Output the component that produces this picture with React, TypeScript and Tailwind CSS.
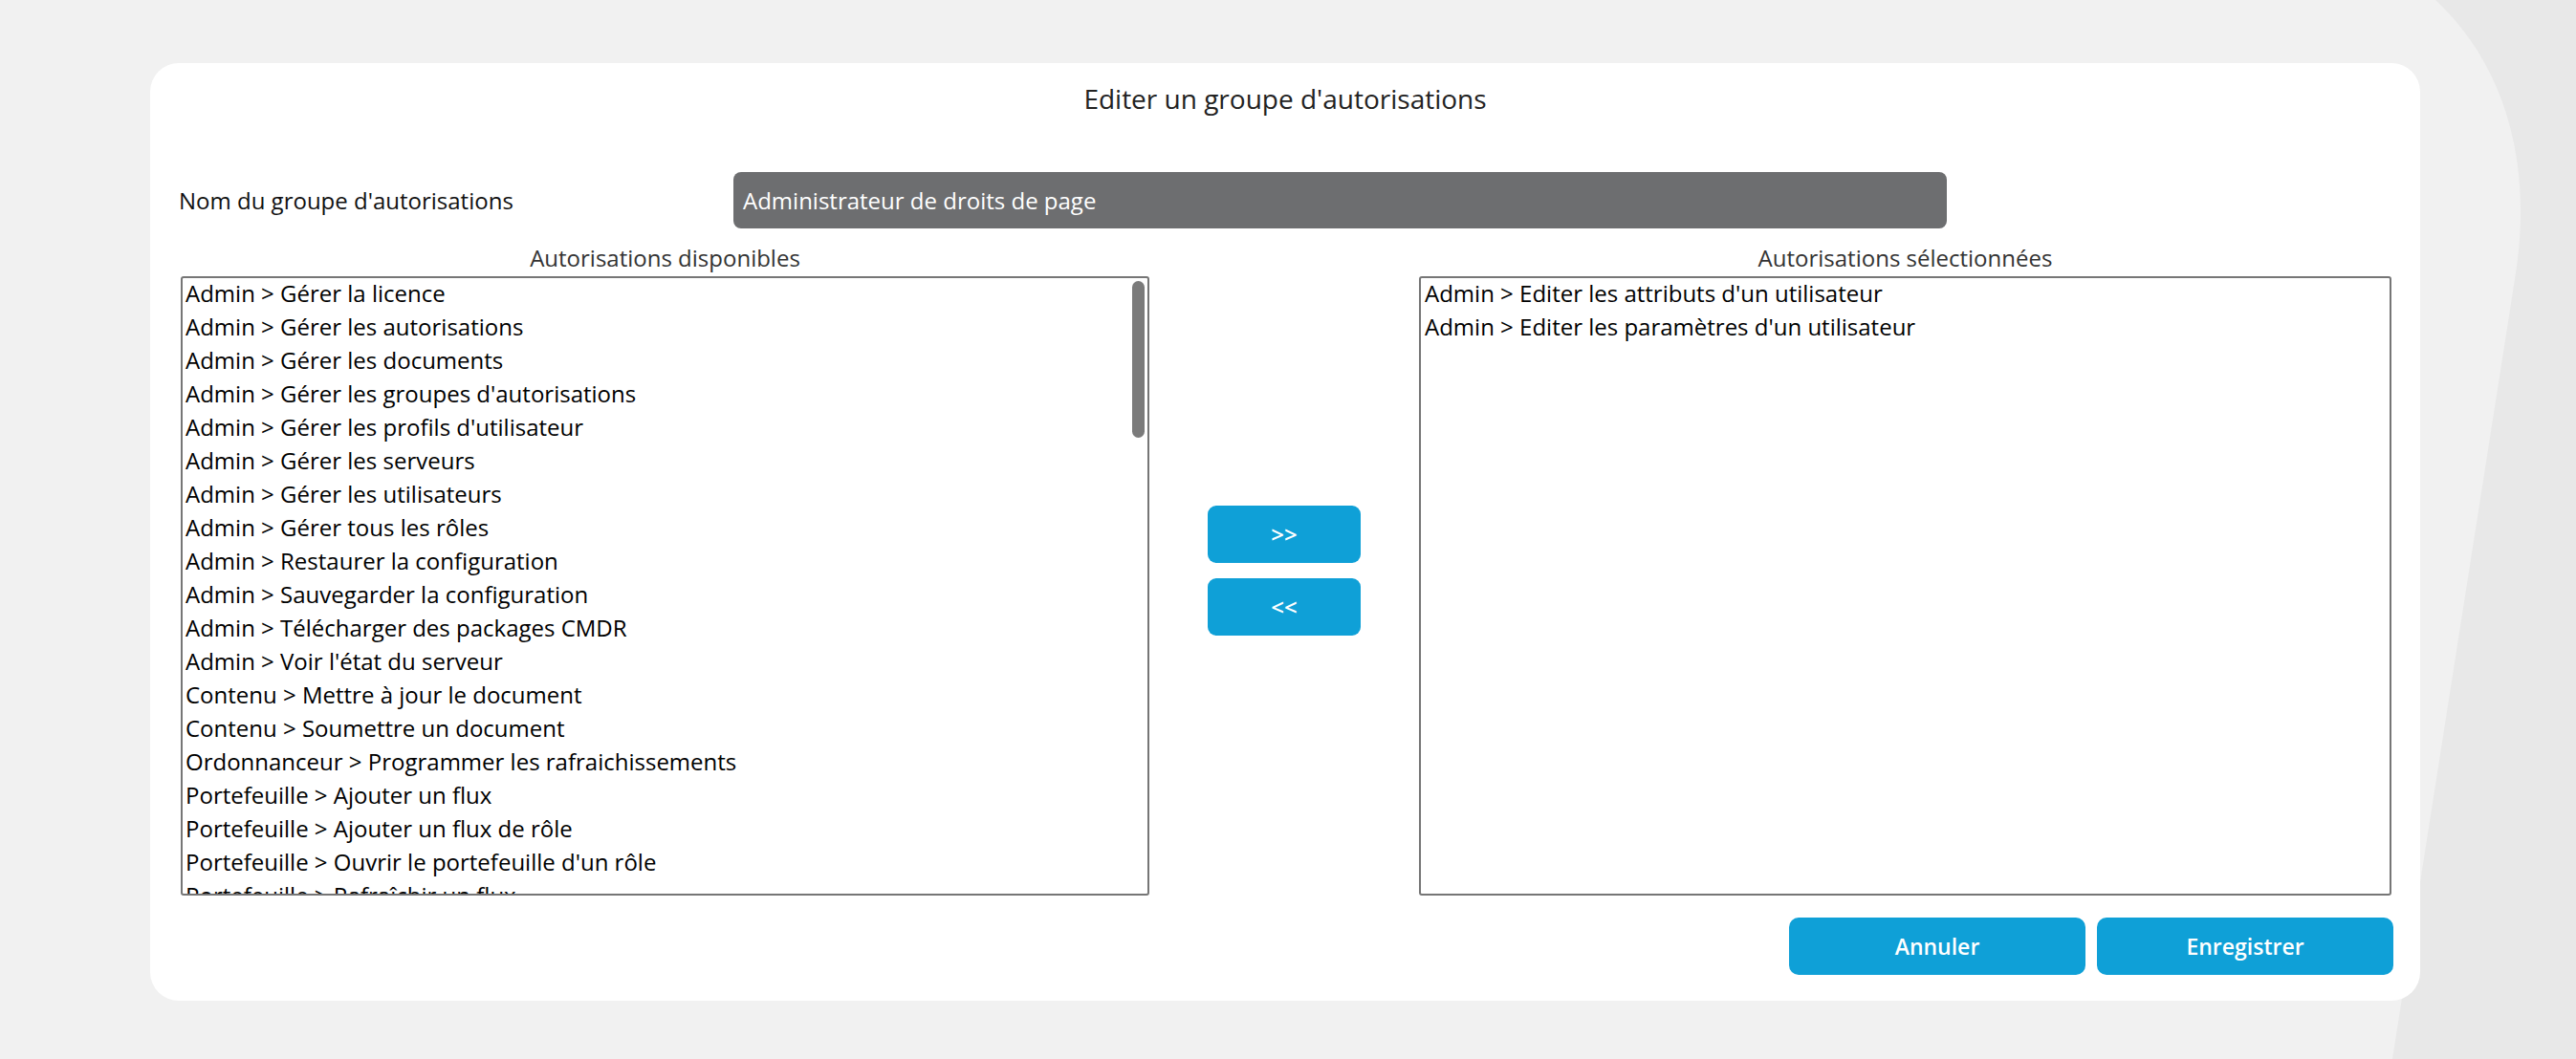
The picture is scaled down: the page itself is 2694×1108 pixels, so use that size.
import { FC } from "react";

const available = [
  "Admin > Gérer la licence",
  "Admin > Gérer les autorisations",
  "Admin > Gérer les documents",
  "Admin > Gérer les groupes d'autorisations",
  "Admin > Gérer les profils d'utilisateur",
  "Admin > Gérer les serveurs",
  "Admin > Gérer les utilisateurs",
  "Admin > Gérer tous les rôles",
  "Admin > Restaurer la configuration",
  "Admin > Sauvegarder la configuration",
  "Admin > Télécharger des packages CMDR",
  "Admin > Voir l'état du serveur",
  "Contenu > Mettre à jour le document",
  "Contenu > Soumettre un document",
  "Ordonnanceur > Programmer les rafraichissements",
  "Portefeuille > Ajouter un flux",
  "Portefeuille > Ajouter un flux de rôle",
  "Portefeuille > Ouvrir le portefeuille d'un rôle",
  "Portefeuille > Rafraîchir un flux",
];

const selected = [
  "Admin > Editer les attributs d'un utilisateur",
  "Admin > Editer les paramètres d'un utilisateur",
];

const App: FC = () => {
  return (
    <div className="relative w-full h-[1108px] overflow-hidden bg-[#f1f1f1] font-['Open_Sans',sans-serif]">
      {/* Background shape */}
      <svg
        className="absolute inset-0"
        width="2694"
        height="1108"
        viewBox="0 0 2694 1108"
      >
        <path
          d="M2547 0 C2612 60 2652 160 2630 292 L2502 1108 L2694 1108 L2694 0 Z"
          fill="#e8e8e8"
        />
      </svg>

      {/* Dialog card */}
      <div className="relative ml-[157px] mt-[66px] w-[2374px] h-[981px] bg-white rounded-[30px] pt-[18px]">
        <h1 className="h-[38px] text-center text-[28px] leading-[38px] text-[#222]">
          Editer un groupe d'autorisations
        </h1>

        {/* Group name */}
        <div className="mt-[58px] flex items-center h-[59px] pl-[30px]">
          <label className="w-[580px] text-[24px] text-[#111]">
            Nom du groupe d'autorisations
          </label>
          <div className="w-[1269px] h-[59px] rounded-[8px] bg-[#6d6e70] flex items-center px-[10px] text-[24px] text-white">
            Administrateur de droits de page
          </div>
        </div>

        {/* Lists */}
        <div className="mt-[17px] grid grid-cols-[1013px_282px_1017px] pl-[32px] pr-[30px]">
          <div className="flex flex-col">
            <div className="h-[28px] text-center text-[24px] leading-[28px] text-[#333]">
              Autorisations disponibles
            </div>
            <div className="relative mt-[5px] h-[648px] border-2 border-[#767676] rounded-[3px] overflow-hidden px-[3px]">
              <div className="-mt-[2px]">
                {available.map((item) => (
                  <div key={item} className="h-[35px] text-[24px] leading-[35px] text-black whitespace-nowrap">
                    {item}
                  </div>
                ))}
              </div>
              <div className="absolute right-[3px] top-[3px] w-[13px] h-[164px] rounded-full bg-[#7b7b7b]" />
            </div>
          </div>

          {/* Move buttons */}
          <div className="flex flex-col items-center justify-center gap-[16px]">
            <button className="w-[160px] h-[60px] rounded-[9px] bg-[#0fa0d7] text-white text-[24px] font-semibold">
              &gt;&gt;
            </button>
            <button className="w-[160px] h-[60px] rounded-[9px] bg-[#0fa0d7] text-white text-[24px] font-semibold">
              &lt;&lt;
            </button>
          </div>

          <div className="flex flex-col">
            <div className="h-[28px] text-center text-[24px] leading-[28px] text-[#333]">
              Autorisations sélectionnées
            </div>
            <div className="mt-[5px] h-[648px] border-2 border-[#767676] rounded-[3px] overflow-hidden px-[4px]">
              <div className="-mt-[2px]">
                {selected.map((item) => (
                  <div key={item} className="h-[35px] text-[24px] leading-[35px] text-black whitespace-nowrap">
                    {item}
                  </div>
                ))}
              </div>
            </div>
          </div>
        </div>

        {/* Footer */}
        <div className="mt-[23px] flex justify-end gap-[12px] pr-[28px]">
          <button className="w-[310px] h-[60px] rounded-[10px] bg-[#0fa0d7] text-white text-[23px] font-semibold">
            Annuler
          </button>
          <button className="w-[310px] h-[60px] rounded-[10px] bg-[#0fa0d7] text-white text-[23px] font-semibold">
            Enregistrer
          </button>
        </div>
      </div>
    </div>
  );
};

export default App;
